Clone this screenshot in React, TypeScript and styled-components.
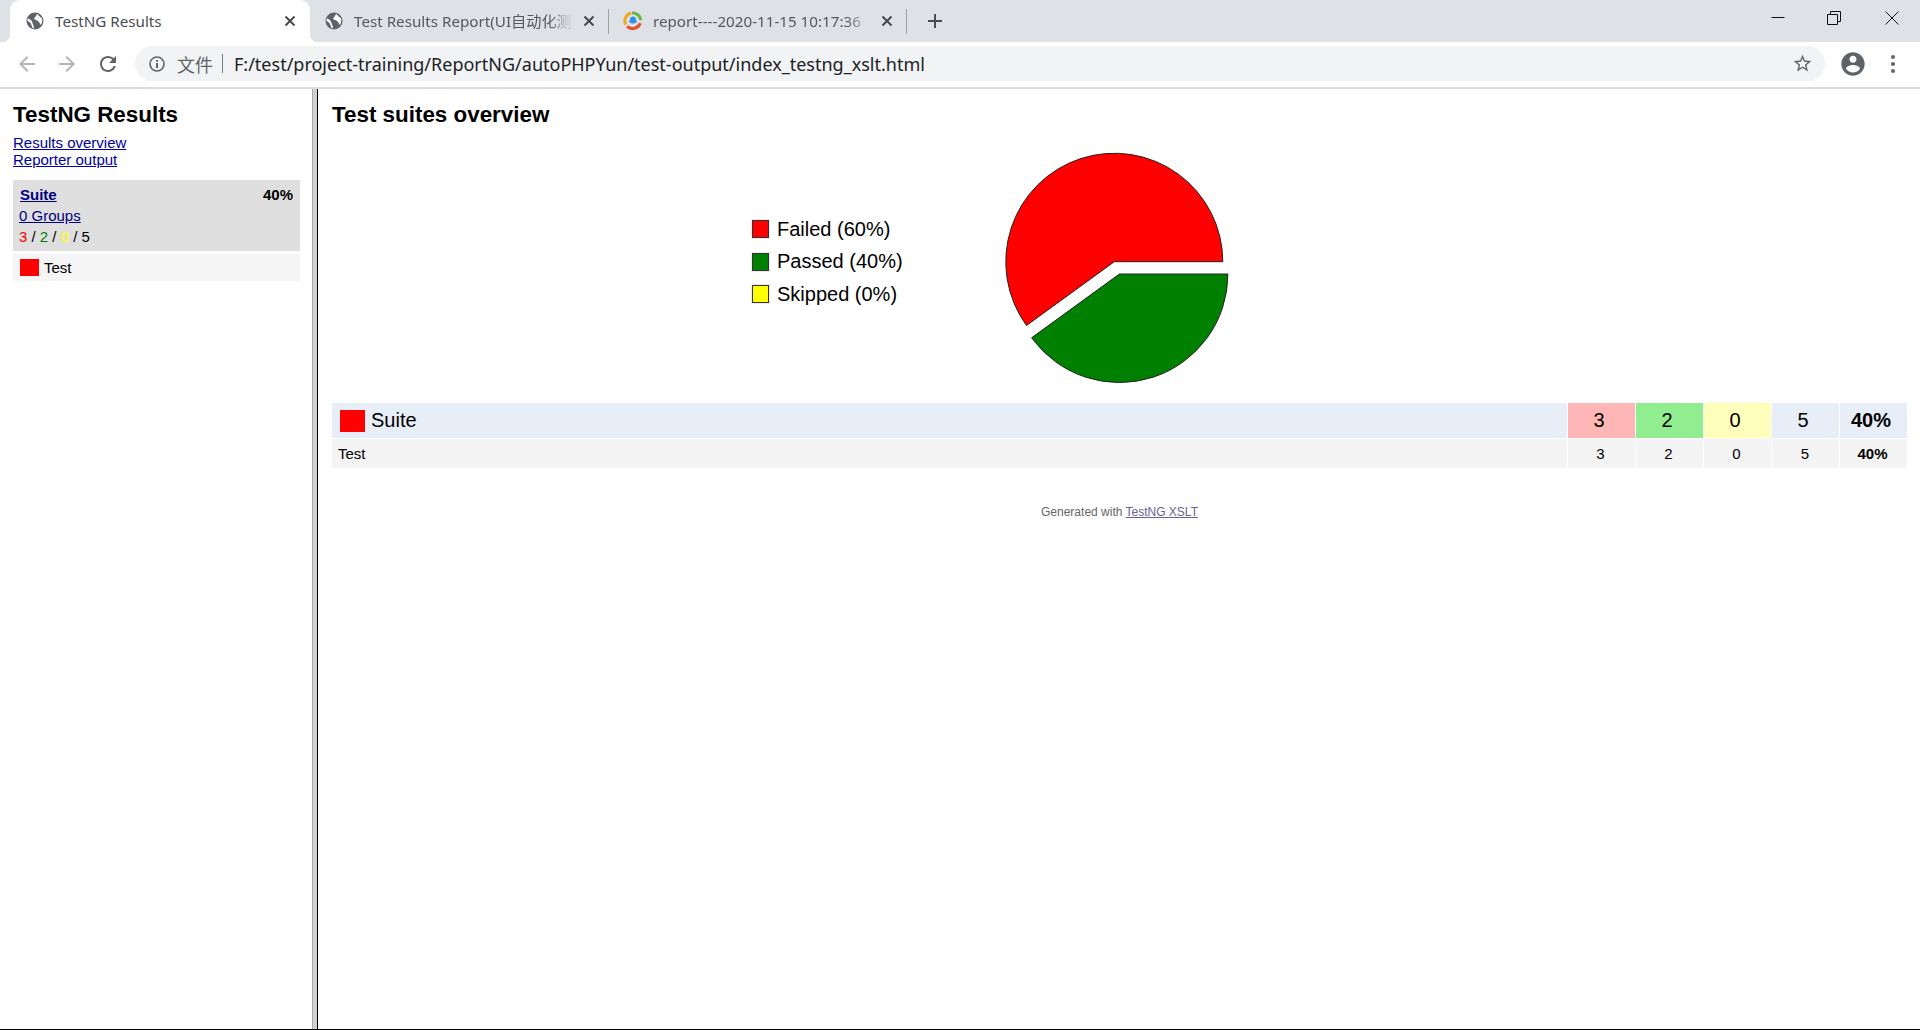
import styled, { createGlobalStyle } from 'styled-components';

const GlobalStyle = createGlobalStyle`
  html, body {
    margin: 0;
    padding: 0;
    background: #fff;
    overflow: hidden;
  }
  * { box-sizing: border-box; }
`;

const Shell = styled.div`
  display: flex;
  flex-direction: column;
  width: 100vw;
  height: 100vh;
  font-family: 'Liberation Sans', Arial, sans-serif;
  color: #000;
`;

/* browser chrome */
const TabStrip = styled.div`
  display: flex;
  height: 42px;
  padding-left: 10px;
  background: #dee1e6;
  flex: none;
`;

const Tab = styled.div<{ $active?: boolean; $divider?: boolean; $width: number; $pad: number }>`
  position: relative;
  display: flex;
  align-items: center;
  width: ${(p) => p.$width}px;
  height: 42px;
  padding: 0 14px 0 ${(p) => p.$pad}px;
  color: ${(p) => (p.$active ? '#4a4d51' : '#55585c')};
  background: ${(p) => (p.$active ? '#fff' : 'transparent')};
  border-radius: ${(p) => (p.$active ? '10px 10px 0 0' : '0')};

  ${(p) =>
    p.$divider &&
    `&::after {
      content: '';
      position: absolute;
      right: 0;
      top: 9px;
      width: 1px;
      height: 25px;
      background: #9fa3a8;
    }`}

  ${(p) =>
    p.$active &&
    `&::before {
      content: '';
      position: absolute;
      left: -8px;
      bottom: 0;
      width: 8px;
      height: 8px;
      background: radial-gradient(circle at 0 0, transparent 8px, #fff 8.5px);
    }
    &::after {
      content: '';
      position: absolute;
      right: -8px;
      bottom: 0;
      width: 8px;
      height: 8px;
      background: radial-gradient(circle at 100% 0, transparent 8px, #fff 8.5px);
    }`}
`;

const Favicon = styled.svg<{ $size: number }>`
  flex: none;
  width: ${(p) => p.$size}px;
  height: ${(p) => p.$size}px;
`;

const TabTitle = styled.span<{ $fade?: boolean; $left: number }>`
  flex: 1;
  min-width: 0;
  margin-left: ${(p) => p.$left}px;
  overflow: hidden;
  white-space: nowrap;
  font-family: 'Noto Sans', 'Noto Sans CJK SC', sans-serif;
  font-size: 15.2px;
  line-height: 20px;
  ${(p) =>
    p.$fade &&
    `-webkit-mask-image: linear-gradient(90deg, #000 calc(100% - 26px), transparent 100%);
     mask-image: linear-gradient(90deg, #000 calc(100% - 26px), transparent 100%);`}
`;

const TabClose = styled.svg`
  flex: none;
  width: 12px;
  height: 12px;
  margin-left: 9px;
  margin-top: -1px;
  stroke: #44474b;
  stroke-width: 1.9;
  fill: none;
`;

const NewTab = styled.svg`
  flex: none;
  width: 16px;
  height: 16px;
  margin: 13px 0 0 20px;
  stroke: #4a4d51;
  stroke-width: 2;
  fill: none;
`;

const WindowControls = styled.div`
  display: flex;
  margin-left: auto;
`;

const WindowButton = styled.div<{ $nudge?: number }>`
  display: flex;
  align-items: center;
  justify-content: center;
  width: 57px;
  height: 36px;
  padding-right: ${(p) => p.$nudge ?? 0}px;
`;

const WindowIcon = styled.svg`
  width: 14px;
  height: 14px;
  stroke: #111;
  stroke-width: 1;
  fill: none;
`;

const Toolbar = styled.div`
  display: flex;
  align-items: center;
  flex: none;
  height: 47px;
  padding: 0 0 2px 15px;
  background: #fff;
  border-bottom: 2px solid #dadce0;
`;

const NavIcon = styled.svg<{ $muted?: boolean; $gap?: number }>`
  flex: none;
  width: 24px;
  height: 24px;
  margin-left: ${(p) => p.$gap ?? 0}px;
  fill: ${(p) => (p.$muted ? '#b2b5b9' : '#5f6368')};
`;

const Omnibox = styled.div`
  display: flex;
  align-items: center;
  width: 1690px;
  height: 35px;
  margin-left: 15px;
  padding: 0 12px 0 13px;
  border-radius: 18px;
  background: #f1f3f4;
`;

const InfoIcon = styled.svg`
  flex: none;
  width: 18px;
  height: 18px;
  fill: none;
  stroke: #5f6368;
  stroke-width: 1.6;
`;

const Scheme = styled.span`
  margin-left: 11px;
  font-family: 'Noto Sans CJK SC', sans-serif;
  font-size: 18px;
  line-height: 22px;
  color: #5f6368;
`;

const SchemeBar = styled.span`
  width: 1px;
  height: 19px;
  margin: 0 11px 0 9px;
  background: #7b7e83;
`;

const Url = styled.span`
  flex: 1;
  font-family: 'Noto Sans', sans-serif;
  font-size: 18px;
  line-height: 24px;
  white-space: nowrap;
  color: #202124;
`;

const StarIcon = styled.svg`
  flex: none;
  width: 21px;
  height: 21px;
  fill: #5f6368;
`;

const AccountIcon = styled.svg`
  flex: none;
  width: 28px;
  height: 28px;
  margin-left: 14px;
  fill: #5f6368;
`;

const MenuIcon = styled.svg`
  flex: none;
  width: 6px;
  height: 20px;
  margin-left: 23px;
  fill: #5f6368;
`;

/* report */
const Page = styled.div`
  display: flex;
  flex: 1;
  min-height: 0;
  border-bottom: 1px solid #000;
`;

const Sidebar = styled.aside`
  flex: none;
  width: 312px;
  padding: 13px 12px 0 13px;
`;

const Splitter = styled.div`
  flex: none;
  width: 6px;
  background: #d0d0d0;
  border-left: 1px solid #aaa;
  border-right: 1px solid #000;
`;

const Main = styled.main`
  flex: 1;
  min-width: 0;
  padding: 13px 13px 0 14px;
`;

const Heading = styled.h1`
  margin: 0;
  font-size: 22.4px;
  line-height: 26px;
  font-weight: 700;
`;

const SideLinks = styled.div`
  display: flex;
  flex-direction: column;
  align-items: flex-start;
  margin: 6px 0 12px;
  font-size: 15px;
  line-height: 17px;

  a { color: #0000a0; }
`;

const SuitePanel = styled.div`
  height: 71px;
  padding: 5px 7px 0 6px;
  background: #dfdfdf;
  font-size: 15px;
  line-height: 20.8px;

  a { color: #000080; }
`;

const SuiteHead = styled.div`
  display: flex;
  justify-content: space-between;
  padding-left: 1px;
  font-weight: 700;
`;

const Count = styled.span<{ $color: string }>`
  color: ${(p) => p.$color};
`;

const TestRow = styled.div`
  display: flex;
  align-items: center;
  gap: 5px;
  height: 27px;
  margin-top: 3px;
  padding-left: 7px;
  background: #f5f5f5;
  font-size: 15px;
`;

const StatusBox = styled.span<{ $w: number; $h: number }>`
  flex: none;
  width: ${(p) => p.$w}px;
  height: ${(p) => p.$h}px;
  background: #f00;
`;

const ChartRow = styled.div`
  display: flex;
  height: 240px;
  margin-top: 20px;
  padding-left: 420px;
`;

const Legend = styled.div`
  width: 248px;
  padding-top: 65px;
  font-size: 20px;
`;

const LegendRow = styled.div`
  display: flex;
  align-items: center;
  gap: 8px;
  height: 32.5px;
`;

const LegendSwatch = styled.span<{ $color: string }>`
  flex: none;
  width: 17px;
  height: 18px;
  background: ${(p) => p.$color};
  border: 1px solid #333;
  box-shadow: 0 0 1px #888;
`;

const Pie = styled.svg`
  flex: none;
  width: 232px;
  height: 240px;
`;

const ResultRow = styled.div<{ $small?: boolean }>`
  display: grid;
  grid-template-columns: 1fr repeat(5, 67px);
  column-gap: 1px;
  height: ${(p) => (p.$small ? 29 : 35)}px;
  margin-top: ${(p) => (p.$small ? 1 : 15)}px;
  font-size: ${(p) => (p.$small ? 15 : 20)}px;
`;

const NameCell = styled.div<{ $bg: string; $pad: number }>`
  display: flex;
  align-items: center;
  gap: 6px;
  padding-left: ${(p) => p.$pad}px;
  background: ${(p) => p.$bg};
`;

const NumCell = styled.div<{ $bg: string; $bold?: boolean; $shift: number }>`
  display: flex;
  align-items: center;
  justify-content: center;
  padding-right: ${(p) => p.$shift}px;
  background: ${(p) => p.$bg};
  font-weight: ${(p) => (p.$bold ? 700 : 400)};
`;

const Footer = styled.div`
  margin-top: 37px;
  text-align: center;
  font-size: 12px;
  line-height: 14px;
  color: #666;

  a { color: #6a6199; }
`;

const GlobeIcon = () => (
  <Favicon $size={18} viewBox="0 0 18 18">
    <circle cx="9" cy="9" r="8.500" fill="#5f6368" />
    <path
      d="M1.800 6.300C4.800 7.600 6 9 6.500 11c.5 2 1.500 3 1.500 5.300l-1.500-.4c-1-1.900-1-3.400-2-4.900-1-1-2-1.500-3-2z"
      fill="#fff"
    />
    <path
      d="M11 1.800c-.5 2.200-2 3.200-3 4.700 1 1.500 3 1.500 4 2.500s2 2 2.500 4c1.500-1.500 2-4 1.700-6.500-1.700-1-3.200-2.700-5.200-4.700z"
      fill="#fff"
    />
  </Favicon>
);

const Close = () => (
  <TabClose viewBox="0 0 12 12">
    <path d="M1.500 1.500l9 9M10.500 1.500l-9 9" />
  </TabClose>
);

const BrowserLogo = () => (
  <Favicon $size={20} viewBox="0 0 22 22" fill="none">
    <path d="M3 15A9 9 0 0 1 9 2.300" stroke="#f5a623" strokeWidth="3.400" />
    <path d="M10 2.200A9 9 0 0 1 19.600 10" stroke="#62b94a" strokeWidth="3.400" />
    <path d="M19 13.500A9 9 0 0 1 4.500 17" stroke="#e8502a" strokeWidth="3.400" />
    <path
      d="M11 6c2.300 0 3.400 1.800 3.400 4 .7 1 1.100 2 .7 2.800-.5-.2-.8-.4-1-.8-.4 1-1.300 1.800-3.100 1.800S8.300 13 7.900 12c-.2.4-.5.6-1 .8-.4-.8 0-1.800.7-2.800C7.600 7.800 8.700 6 11 6z"
      fill="#2f8fe6"
    />
  </Favicon>
);

const App = () => {
  return (
    <Shell>
      <GlobalStyle />
      <TabStrip>
        <Tab $active $width={300} $pad={16}>
          <GlobeIcon />
          <TabTitle $left={11}>TestNG Results</TabTitle>
          <Close />
        </Tab>
        <Tab $width={299} $pad={15} $divider>
          <GlobeIcon />
          <TabTitle $left={11} $fade>
            Test Results Report(UI自动化测
          </TabTitle>
          <Close />
        </Tab>
        <Tab $width={298} $pad={14} $divider>
          <BrowserLogo />
          <TabTitle $left={10} $fade>
            report----2020-11-15 10:17:36
          </TabTitle>
          <Close />
        </Tab>
        <NewTab viewBox="0 0 16 16">
          <path d="M8 1v14M1 8h14" />
        </NewTab>
        <WindowControls>
          <WindowButton>
            <WindowIcon viewBox="0 0 14 14">
              <path d="M0.500 6.500h13" />
            </WindowIcon>
          </WindowButton>
          <WindowButton $nudge={2}>
            <WindowIcon viewBox="0 0 14 14">
              <path d="M0.500 3.500h10v10h-10zM3.500 3.500v-3h10v10h-3" />
            </WindowIcon>
          </WindowButton>
          <WindowButton>
            <WindowIcon viewBox="0 0 14 14">
              <path d="M0.500 0.500l13 13M13.500 0.500l-13 13" />
            </WindowIcon>
          </WindowButton>
        </WindowControls>
      </TabStrip>

      <Toolbar>
        <NavIcon $muted viewBox="0 0 24 24">
          <path d="M20 11H7.830l5.590-5.590L12 4l-8 8 8 8 1.410-1.410L7.830 13H20v-2z" />
        </NavIcon>
        <NavIcon $muted $gap={16} viewBox="0 0 24 24">
          <path d="M4 11h12.170l-5.590-5.590L12 4l8 8-8 8-1.410-1.410L16.170 13H4v-2z" />
        </NavIcon>
        <NavIcon $gap={17} viewBox="0 0 24 24">
          <path d="M17.650 6.350C16.200 4.900 14.210 4 12 4c-4.420 0-7.990 3.580-7.990 8s3.570 8 7.990 8c3.730 0 6.840-2.550 7.730-6h-2.080c-.82 2.330-3.040 4-5.650 4-3.310 0-6-2.690-6-6s2.690-6 6-6c1.660 0 3.140.69 4.220 1.780L13 11h7V4l-2.350 2.350z" />
        </NavIcon>
        <Omnibox>
          <InfoIcon viewBox="0 0 18 18">
            <circle cx="9" cy="9" r="7" />
            <path d="M9 8v5M9 5v1.800" strokeWidth="2" />
          </InfoIcon>
          <Scheme>文件</Scheme>
          <SchemeBar />
          <Url>F:/test/project-training/ReportNG/autoPHPYun/test-output/index_testng_xslt.html</Url>
          <StarIcon viewBox="0 0 24 24">
            <path d="M22 9.240l-7.190-.62L12 2 9.190 8.630 2 9.240l5.460 4.730L5.820 21 12 17.270 18.180 21l-1.630-7.030L22 9.240zM12 15.400l-3.760 2.270 1-4.280-3.320-2.880 4.380-.38L12 6.100l1.710 4.040 4.380.38-3.320 2.880 1 4.280L12 15.400z" />
          </StarIcon>
        </Omnibox>
        <AccountIcon viewBox="0 0 24 24">
          <path d="M12 2C6.480 2 2 6.480 2 12s4.480 10 10 10 10-4.480 10-10S17.520 2 12 2zm0 3c1.660 0 3 1.340 3 3s-1.340 3-3 3-3-1.340-3-3 1.340-3 3-3zm0 14.200c-2.500 0-4.710-1.280-6-3.220.03-1.990 4-3.080 6-3.080 1.990 0 5.970 1.090 6 3.080-1.290 1.940-3.500 3.220-6 3.220z" />
        </AccountIcon>
        <MenuIcon viewBox="0 0 6 20">
          <circle cx="3" cy="3" r="2" />
          <circle cx="3" cy="10" r="2" />
          <circle cx="3" cy="17" r="2" />
        </MenuIcon>
      </Toolbar>

      <Page>
        <Sidebar>
          <Heading>TestNG Results</Heading>
          <SideLinks>
            <a href="#overview">Results overview</a>
            <a href="#output">Reporter output</a>
          </SideLinks>
          <SuitePanel>
            <SuiteHead>
              <a href="#suite">Suite</a>
              <span>40%</span>
            </SuiteHead>
            <div>
              <a href="#groups">0 Groups</a>
            </div>
            <div>
              <Count $color="#f00">3</Count> / <Count $color="#008000">2</Count> /{' '}
              <Count $color="#ff0">0</Count> / 5
            </div>
          </SuitePanel>
          <TestRow>
            <StatusBox $w={19} $h={17} />
            Test
          </TestRow>
        </Sidebar>
        <Splitter />
        <Main>
          <Heading>Test suites overview</Heading>
          <ChartRow>
            <Legend>
              <LegendRow>
                <LegendSwatch $color="#f00" />
                Failed (60%)
              </LegendRow>
              <LegendRow>
                <LegendSwatch $color="#008000" />
                Passed (40%)
              </LegendRow>
              <LegendRow>
                <LegendSwatch $color="#ff0" />
                Skipped (0%)
              </LegendRow>
            </Legend>
            <Pie viewBox="1000 148 232 240">
              <path
                d="M1114.300 261.700L1026.500 325.500A108.500 108.500 0 1 1 1222.800 261.700Z"
                fill="#f00"
                stroke="#222"
                strokeWidth="1"
              />
              <path
                d="M1119.400 274L1031.600 337.800A108.500 108.500 0 0 0 1227.900 274Z"
                fill="#008000"
                stroke="#222"
                strokeWidth="1"
              />
            </Pie>
          </ChartRow>
          <ResultRow>
            <NameCell $bg="#e8eef7" $pad={8}>
              <StatusBox $w={25} $h={22} />
              Suite
            </NameCell>
            <NumCell $bg="#ffb6b6" $shift={5}>3</NumCell>
            <NumCell $bg="#90ee90" $shift={5}>2</NumCell>
            <NumCell $bg="#ffffbb" $shift={5}>0</NumCell>
            <NumCell $bg="#e8eef7" $shift={5}>5</NumCell>
            <NumCell $bg="#e8eef7" $shift={5} $bold>40%</NumCell>
          </ResultRow>
          <ResultRow $small>
            <NameCell $bg="#f4f4f4" $pad={6}>Test</NameCell>
            <NumCell $bg="#f4f4f4" $shift={2}>3</NumCell>
            <NumCell $bg="#f4f4f4" $shift={2}>2</NumCell>
            <NumCell $bg="#f4f4f4" $shift={2}>0</NumCell>
            <NumCell $bg="#f4f4f4" $shift={1}>5</NumCell>
            <NumCell $bg="#f4f4f4" $shift={2} $bold>40%</NumCell>
          </ResultRow>
          <Footer>
            Generated with <a href="#xslt">TestNG XSLT</a>
          </Footer>
        </Main>
      </Page>
    </Shell>
  );
};

export default App;
